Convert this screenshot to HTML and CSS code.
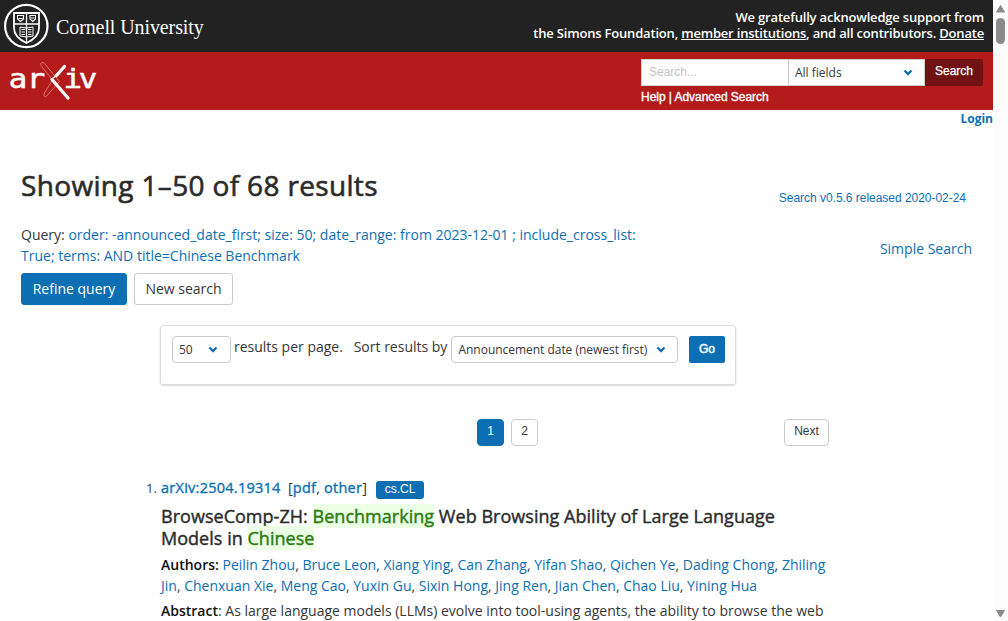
FILE: index.html
```html
<!DOCTYPE html>
<html lang="en">
<head>
<meta charset="utf-8">
<title>Search | arXiv e-print repository</title>
<link rel="stylesheet" href="styles.css">
</head>
<body>
<div class="page">
  <header>
    <div class="cornell">
      <svg class="cornell-logo" width="240" height="52" viewBox="0 0 240 52" fill="none" stroke="#fff">
        <circle cx="26.3" cy="26" r="21.2" stroke-width="2.2"/>
        <path d="M14 13H39V28C39 36 33 40 26.500 43C20 40 14 36 14 28Z" stroke-width="1.8"/>
        <path d="M14 24H39M26.500 13V42" stroke-width="1.3"/>
        <path d="M17.500 15.500H23.500V19L20.500 21.500L17.500 19ZM30 15.500H35.500V19L32.700 21.500L30 19ZM18.500 18.500H22.500M31 18H34.500" stroke-width="1.1"/>
        <path d="M20 27L26.500 28L33 27V36L26.500 37L20 36ZM21.500 29.500H25M21.500 32H25M21.500 34.500H25M28 29.500H31.500M28 32H31.500M28 34.500H31.500" stroke-width="1"/>
        <text class="cornell-name" x="56" y="33.500">Cornell University</text>
      </svg>
      <div class="support">We gratefully acknowledge support from<br>the Simons Foundation, <a>member institutions</a>, and all contributors. <a>Donate</a></div>
    </div>
    <div class="banner">
      <svg class="arxiv-logo" width="110" height="58" viewBox="0 0 110 58">
        <g class="logo-text" transform="scale(1.16 1)">
          <text x="7.600 23" y="36.300">ar</text>
          <text x="54.800 67.800" y="36.300">iv</text>
        </g>
        <path d="M42 10.500C40 12 40.500 13 42 15L52.500 28L44.500 41C43 44 45 46 47 43.500L59.500 29.500L44.500 11.500Q43 10 42 10.500Z" fill="none" stroke="#e48d8d" stroke-width=".8"/>
        <path d="M64.500 14.500L56.500 23.500M52 27.500L68 46" stroke="#fff" stroke-width="3.300" stroke-linecap="round"/>
        <path d="M57 22.500L51 28" fill="none" stroke="#fff" stroke-width="1.300"/>
      </svg>
      <div class="quick-search">
        <div class="fields">
          <div class="search-input">Search...</div>
          <div class="field-select">All fields<svg class="chevron" viewBox="0 0 10 7"><path d="M1.500 1.500L5 5L8.500 1.500"/></svg></div>
          <div class="search-button">Search</div>
        </div>
        <div class="help">Help | Advanced Search</div>
      </div>
    </div>
  </header>
  <div class="login">Login</div>
  <main>
    <div class="title-row"><h1>Showing 1–50 of 68 results</h1><a class="version">Search v0.5.6 released 2020-02-24</a></div>
    <div class="query-row">
      <div class="query">
        <div>Query: <a>order: -announced_date_first; size: 50; date_range: from 2023-12-01 ; include_cross_list:<br>True; terms: AND title=Chinese Benchmark</a></div>
        <div class="actions"><a class="button primary">Refine query</a><a class="button">New search</a></div>
      </div>
      <a class="simple">Simple Search</a>
    </div>
    <div class="sort-box">
      <div class="select size">50<svg class="chevron" viewBox="0 0 10 7"><path d="M1.500 1.500L5 5L8.500 1.500"/></svg></div>
      <span class="per-page">results per page.</span>
      <span class="sort-label">Sort results by</span>
      <div class="select order">Announcement date (newest first)<svg class="chevron" viewBox="0 0 10 7"><path d="M1.500 1.500L5 5L8.500 1.500"/></svg></div>
      <div class="go">Go</div>
    </div>
    <nav class="pagination"><a class="num current">1</a><a class="num">2</a><a class="next">Next</a></nav>
    <div class="result">
      <span class="index">1.</span>
      <div class="entry">
        <div class="ids"><a>arXiv:2504.19314</a><span class="formats">[<a>pdf</a>, <a>other</a>]</span><span class="tag">cs.CL</span></div>
        <p class="paper-title">BrowseComp-ZH: <mark>Benchmarking</mark> Web Browsing Ability of Large Language<br>Models in <mark>Chinese</mark></p>
        <p class="authors"><b>Authors:</b> <a>Peilin Zhou</a>, <a>Bruce Leon</a>, <a>Xiang Ying</a>, <a>Can Zhang</a>, <a>Yifan Shao</a>, <a>Qichen Ye</a>, <a>Dading Chong</a>, <a>Zhiling<br>Jin</a>, <a>Chenxuan Xie</a>, <a>Meng Cao</a>, <a>Yuxin Gu</a>, <a>Sixin Hong</a>, <a>Jing Ren</a>, <a>Jian Chen</a>, <a>Chao Liu</a>, <a>Yining Hua</a></p>
        <p class="abstract"><b>Abstract</b>: As large language models (LLMs) evolve into tool-using agents, the ability to browse the web</p>
      </div>
    </div>
  </main>
</div>
<div class="scrollbar">
  <svg width="15" height="621" viewBox="0 0 15 621" fill="#8b8b8b"><path d="M3.500 12L7.500 5.500L11.500 12Z" stroke="#8b8b8b" stroke-linejoin="round"/><rect x="3" y="18" width="9" height="26" rx="4.500"/><path d="M3.500 610.500L7.500 617L11.500 610.500Z" stroke="#8b8b8b" stroke-linejoin="round"/></svg>
</div>
</body>
</html>
```
FILE: styles.css
```css
* { box-sizing: border-box; }
body { margin: 0; width: 1008px; height: 621px; overflow: hidden; display: flex; background: #fff; color: #363636; font: 14px/21px "Open Sans", sans-serif; white-space: nowrap; }
a { color: #0c6fb4; }
p, h1 { margin: 0; }
.page { width: 993px; height: 621px; overflow: hidden; }
.scrollbar { width: 15px; background: #fcfcfc; }
svg { display: block; flex: none; }
.cornell { height: 52px; background: #222; display: flex; justify-content: space-between; padding-right: 9px; }
.cornell-name { font: 20px "Liberation Serif", serif; letter-spacing: -.1px; fill: #fff; stroke: none; }
.support { padding-top: 9px; color: #fff; text-align: right; font-size: 13px; line-height: 16px; font-weight: 600; letter-spacing: -.19px; }
.support a { color: #fff; text-decoration: underline; }
.banner { height: 58px; background: #b31b1b; display: flex; justify-content: space-between; padding-right: 10px; }
.logo-text { font: 26.500px "DejaVu Sans Mono", monospace; fill: #fff; stroke: #fff; stroke-width: .5px; }
.quick-search { width: 342px; padding-top: 7px; }
.fields { display: flex; height: 27px; font-size: 12px; line-height: 25px; }
.search-input { width: 147px; background: #fff; color: #c4c4c4; padding-left: 7px; font-family: "Liberation Sans", sans-serif; border: 1px solid #d8d8d8; border-right: 0; }
.field-select { width: 137px; background: #fff; color: #363636; border: 1px solid #ccc; padding: 0 11px 0 6px; display: flex; justify-content: space-between; align-items: center; line-height: 24px; }
.chevron { width: 10px; height: 7px; fill: none; stroke: #0c6fb4; stroke-width: 2.300; }
.search-button { width: 58px; background: #711111; color: #fff; text-align: center; font-family: "Liberation Sans", sans-serif; border-radius: 0 2px 2px 0; -webkit-text-stroke: .25px #fff; }
.help { color: #fff; font: 12px/22px "Liberation Sans", sans-serif; letter-spacing: -.04px; -webkit-text-stroke: .35px #fff; }
.login { height: 19px; line-height: 18px; font-size: 12px; font-weight: 700; text-align: right; color: #0c6fb4; }
main { padding: 35px 21px 0; }
.title-row { display: flex; justify-content: space-between; height: 60px; padding-right: 6px; }
h1 { font-size: 28px; line-height: 42px; font-weight: 400; letter-spacing: .34px; -webkit-text-stroke: .6px #2b2b2b; color: #2b2b2b; }
.version { padding-top: 24px; font: 12px/21px "Liberation Sans", sans-serif; letter-spacing: -.03px; }
.query-row { display: flex; justify-content: space-between; height: 101px; }
.simple { padding-top: 14px; }
.actions { display: flex; gap: 7px; margin-top: 7px; }
.button { width: 99px; text-align: center; height: 32px; line-height: 30px; border: 1px solid #ccc; border-radius: 3px; color: #363636; }
.primary { width: 106px; background: #0c6fb4; border-color: #0c6fb4; color: #fff; }
.sort-box { margin-left: 139px; width: 576px; height: 60px; border: 1px solid #ddd; border-radius: 3px; box-shadow: 0 1px 2px rgba(0,0,0,.15); display: flex; padding: 10px 10px 0 11px; }
.select { height: 27px; border: 1px solid #ccc; border-radius: 4px; font-size: 12px; line-height: 27px; display: flex; align-items: center; justify-content: space-between; padding: 0 11px 0 6px; }
.size { width: 59px; padding-right: 12px; }
.order { width: 227px; letter-spacing: -.03px; }
.per-page { margin-left: 3px; width: 119px; }
.sort-label { width: 98px; margin-left: 1px; }
.go { margin-left: 11px; width: 36px; height: 27px; background: #0c6fb4; color: #fff; font: 12px/26px "Liberation Sans", sans-serif; -webkit-text-stroke: .5px #fff; text-align: center; border-radius: 2px; }
.pagination { display: flex; margin: 34px 0 0 456px; font: 12px/23px "Liberation Sans", sans-serif; height: 27px; }
.pagination a { height: 27px; border: 1px solid #ccc; border-radius: 4px; color: #363636; text-align: center; }
.pagination .num { width: 27px; margin-right: 7px; }
.pagination .current { background: #0c6fb4; border-color: #0c6fb4; color: #fff; }
.pagination .next { width: 45px; margin-left: 239px; }
.result { display: flex; margin: 31px 0 0 125px; }
.index { width: 15px; font-size: 13px; line-height: 22px; }
.ids { display: flex; height: 21px; }
.ids > a { width: 120px; }
.ids a { font-size: 14.500px; letter-spacing: .26px; -webkit-text-stroke: .35px #0c6fb4; }
.formats { margin-left: 7px; width: 80px; font-size: 14.500px; letter-spacing: .1px; }
.tag { margin: 4px 0 0 8px; width: 48px; height: 18px; border-radius: 3px; background: #0c6fb4; color: #fff; font: 12px/16px "Liberation Sans", sans-serif; text-align: center; }
.paper-title { margin-top: 7px; font-size: 18px; line-height: 22px; font-weight: 400; letter-spacing: .03px; -webkit-text-stroke: .4px; color: #2b2b2b; }
mark { background: #ebffe4; color: #2a7b0f; }
.authors { margin-top: 5px; }
.abstract { margin-top: 4px; }
b { font-weight: 600; color: #111; }
```
